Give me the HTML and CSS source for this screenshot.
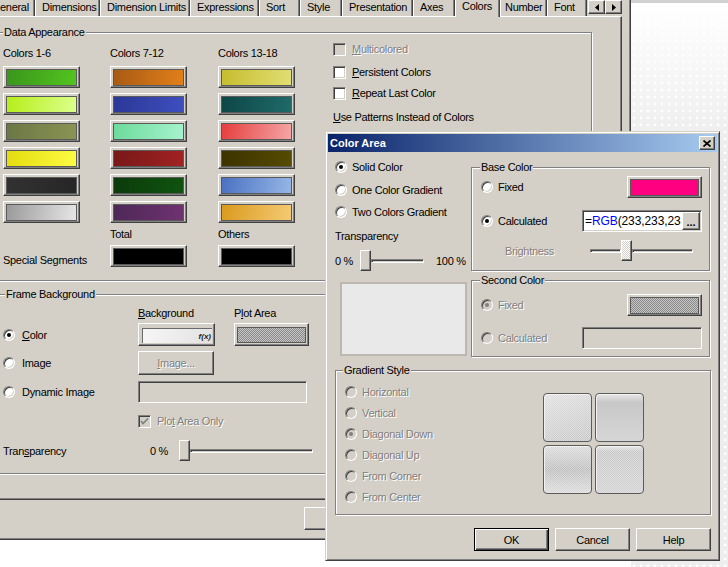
FILE: index.html
```html
<!DOCTYPE html>
<html>
<head>
<meta charset="utf-8">
<link rel="stylesheet" href="styles.css">
</head>
<body>
<div class="screen">
  <div class="mainwin">
    <div class="tabbar">
      <div class="tab first w-gen">eneral</div>
      <div class="tab w-dim">Dimensions</div>
      <div class="tab w-lim">Dimension Limits</div>
      <div class="tab w-exp">Expressions</div>
      <div class="tab w-sort">Sort</div>
      <div class="tab w-style">Style</div>
      <div class="tab w-pres">Presentation</div>
      <div class="tab w-axes">Axes</div>
      <div class="tab sel w-col">Colors</div>
      <div class="tab w-num">Number</div>
      <div class="tab w-font">Font</div>
      <div class="tabarrows">
        <div class="btn arrow"><svg width="4" height="7" viewBox="0 0 4 7"><polygon points="4,0 4,7 0,3.5" fill="#000"/></svg></div>
        <div class="btn arrow"><svg width="4" height="7" viewBox="0 0 4 7"><polygon points="0,0 0,7 4,3.5" fill="#000"/></svg></div>
      </div>
    </div>
    <div class="page">
      <div class="group g-data">
        <span class="glabel gl-data">Data Appearance</span>
        <div class="colors">
          <div class="hdr">Colors 1-6</div>
          <div class="hdr">Colors 7-12</div>
          <div class="hdr">Colors 13-18</div>

          <div class="btn cbtn"><div class="sw c1"></div></div>
          <div class="btn cbtn"><div class="sw c7"></div></div>
          <div class="btn cbtn"><div class="sw c13"></div></div>

          <div class="btn cbtn"><div class="sw c2"></div></div>
          <div class="btn cbtn"><div class="sw c8"></div></div>
          <div class="btn cbtn"><div class="sw c14"></div></div>

          <div class="btn cbtn"><div class="sw c3"></div></div>
          <div class="btn cbtn"><div class="sw c9"></div></div>
          <div class="btn cbtn"><div class="sw c15"></div></div>

          <div class="btn cbtn"><div class="sw c4"></div></div>
          <div class="btn cbtn"><div class="sw c10"></div></div>
          <div class="btn cbtn"><div class="sw c16"></div></div>

          <div class="btn cbtn"><div class="sw c5"></div></div>
          <div class="btn cbtn"><div class="sw c11"></div></div>
          <div class="btn cbtn"><div class="sw c17"></div></div>

          <div class="btn cbtn"><div class="sw c6"></div></div>
          <div class="btn cbtn"><div class="sw c12"></div></div>
          <div class="btn cbtn"><div class="sw c18"></div></div>

          <div class="sublbl col2">Total</div>
          <div class="sublbl col3">Others</div>

          <div class="special">Special Segments</div>
          <div class="btn cbtn"><div class="sw cblack"></div></div>
          <div class="btn cbtn"><div class="sw cblack"></div></div>
        </div>
        <div class="opts">
          <div class="opt"><span class="check dis"></span><span class="dis"><u>M</u>ulticolored</span></div>
          <div class="opt o2"><span class="check"></span><span><u>P</u>ersistent Colors</span></div>
          <div class="opt o3"><span class="check"></span><span><u>R</u>epeat Last Color</span></div>
          <div class="opt o4"><span><u>U</u>se Patterns Instead of Colors</span></div>
        </div>
      </div>

      <div class="group g-frame">
        <span class="glabel gl-frame">Frame Background</span>
        <div class="frow fr1">
          <span></span>
          <span><u>B</u>ackground</span>
          <span>P<u>l</u>ot Area</span>
        </div>
        <div class="frow fr2">
          <div class="ritem"><span class="radio on"></span><span><u>C</u>olor</span></div>
          <div class="btn bgbtn"><div class="bgsw"><span class="fx">f(x)</span></div></div>
          <div class="btn plotbtn"><div class="checker plotsw"></div></div>
        </div>
        <div class="frow fr3">
          <div class="ritem"><span class="radio"></span><span>Image</span></div>
          <div class="btn imgbtn"><span class="dis"><u>I</u>mage...</span></div>
          <span></span>
        </div>
        <div class="frow fr4">
          <div class="ritem"><span class="radio"></span><span>Dynamic Image</span></div>
          <div class="field dynfield"></div>
        </div>
        <div class="frow fr5">
          <span></span>
          <div class="opt"><span class="check dis"><svg width="11" height="11" viewBox="0 0 11 11"><path d="M2 5 L4 7.5 L9 2.5" fill="none" stroke="#808080" stroke-width="1.6"/></svg></span><span class="dis">Plo<u>t</u> Area Only</span></div>
        </div>
        <div class="ftrans">
          <span class="ftlabel">Tran<u>s</u>parency</span>
          <span class="ftpct">0 %</span>
          <div class="slider fslider"><div class="btn thumb"></div><div class="track"></div></div>
        </div>
      </div>
    </div>
    <div class="winbtns"><div class="btn pbtn"></div></div>
  </div>
  <div class="side"></div>
</div>

<div class="dialog">
  <div class="titlebar">
    <span class="title">Color Area</span>
    <div class="btn closebtn"><svg width="8" height="7" viewBox="0 0 8 7"><path d="M0.5 0.5 L7.5 6.5 M7.5 0.5 L0.5 6.5" stroke="#000" stroke-width="1.7"/></svg></div>
  </div>
  <div class="dbody">
    <div class="dtop">
      <div class="dleft">
        <div class="rrow"><span class="radio on"></span><span>Solid Color</span></div>
        <div class="rrow r2"><span class="radio"></span><span>One Color Gradient</span></div>
        <div class="rrow"><span class="radio"></span><span>Two Colors Gradient</span></div>
        <div class="tlabel">Transparency</div>
        <div class="trow">
          <span class="p0">0 %</span>
          <div class="slider dslider"><div class="btn thumb"></div><div class="track"></div></div>
          <span class="p100">100 %</span>
        </div>
        <div class="preview"></div>
      </div>
      <div class="dright">
        <div class="group gbase">
          <span class="glabel gl-base">Base Color</span>
          <div class="grow">
            <div class="rrow"><span class="radio"></span><span>Fixed</span></div>
            <div class="btn cbtn wide"><div class="sw cpink"></div></div>
          </div>
          <div class="grow row2">
            <div class="rrow"><span class="radio on"></span><span>Calculated</span></div>
            <div class="field calc"><span class="ftext">=<span class="fn">RGB</span>(233,233,23</span><div class="btn dots">...</div></div>
          </div>
          <div class="brow">
            <span class="dis blbl">Brightness</span>
            <div class="slider bslider"><div class="track tleft"></div><div class="btn thumb dotted"></div><div class="track"></div></div>
          </div>
        </div>
        <div class="group gsecond">
          <span class="glabel gl-base">Second Color</span>
          <div class="grow g2r1">
            <div class="rrow"><span class="radio dis on"></span><span class="dis">Fixed</span></div>
            <div class="btn cbtn wide"><div class="sw checker"></div></div>
          </div>
          <div class="grow row2b">
            <div class="rrow"><span class="radio dis"></span><span class="dis">Calculated</span></div>
            <div class="field calc2"></div>
          </div>
        </div>
      </div>
    </div>
    <div class="group ggrad">
      <span class="glabel gl-grad">Gradient Style</span>
      <div class="gradlist">
        <div class="rrow g"><span class="radio dis"></span><span class="dis">Horizontal</span></div>
        <div class="rrow g"><span class="radio dis"></span><span class="dis">Vertical</span></div>
        <div class="rrow g"><span class="radio dis on"></span><span class="dis">Diagonal Down</span></div>
        <div class="rrow g"><span class="radio dis"></span><span class="dis">Diagonal Up</span></div>
        <div class="rrow g"><span class="radio dis"></span><span class="dis">From Corner</span></div>
        <div class="rrow g"><span class="radio dis"></span><span class="dis">From Center</span></div>
      </div>
      <div class="tiles">
        <div class="tile t1"></div>
        <div class="tile t2"></div>
        <div class="tile t3"></div>
        <div class="tile t4"></div>
      </div>
    </div>
    <div class="dbtns">
      <div class="btn pbtn def">OK</div>
      <div class="btn pbtn">Cancel</div>
      <div class="btn pbtn">Help</div>
    </div>
  </div>
</div>
</body>
</html>
```
FILE: styles.css
```css
* { box-sizing: border-box; }
body {
  margin: 0;
  width: 728px;
  height: 567px;
  overflow: hidden;
  background: #fff;
  font-family: "Liberation Sans", Arial, sans-serif;
  font-size: 11px;
  letter-spacing: -0.3px;
  color: #000;
  position: relative;
}
u { text-underline-offset: 1px; }
.screen { display: flex; align-items: flex-start; height: 567px; }
.mainwin {
  width: 631px; height: 540px; flex: none;
  background: #d4d0c8;
  border-right: 1px solid #404040;
  border-bottom: 1px solid #404040;
  box-shadow: inset -1px -1px 0 #808080;
  overflow: hidden;
}
.side {
  flex: 1; height: 567px;
  border-top: 3px solid #d2d2d2;
  background:
    radial-gradient(circle at 3px 3px, #fff 1px, transparent 1.7px) 0 0 / 7px 7px,
    linear-gradient(#ffffff, #ebebeb 160px, #eeeeee);
}

/* generic win classic widgets */
.btn {
  background: #d4d0c8;
  border: 1px solid;
  border-color: #fff #404040 #404040 #fff;
  box-shadow: inset -1px -1px 0 #808080;
}
.field {
  border: 1px solid;
  border-color: #808080 #fff #fff #808080;
  box-shadow: inset 1px 1px 0 #404040, inset -1px -1px 0 #d4d0c8;
}
.radio {
  position: relative; flex: none;
  width: 12px; height: 12px; border-radius: 50%;
  background: #fff;
  border: 1px solid; border-color: #808080 #fff #fff #808080;
  box-shadow: inset 1px 1px 0 #404040, inset -1px -1px 0 #d4d0c8;
}
.radio.on::after {
  content: ""; position: absolute; left: 3px; top: 3px;
  width: 4px; height: 4px; border-radius: 50%; background: #000;
}
.radio.dis { background: #d4d0c8; }
.radio.dis.on::after { background: #808080; }
.check {
  flex: none; display: flex; align-items: center; justify-content: center;
  width: 13px; height: 13px; background: #fff;
  border: 1px solid; border-color: #808080 #fff #fff #808080;
  box-shadow: inset 1px 1px 0 #404040, inset -1px -1px 0 #d4d0c8;
}
.check.dis { background: #d4d0c8; }
.dis { color: #808080; text-shadow: 1px 1px 0 #fff; }
.checker {
  background: repeating-conic-gradient(#8a8a8a 0 25%, #c4c4c4 0 50%) 0 0 / 2px 2px;
}

/* tabs */
.tabbar { display: flex; height: 16px; width: 622px; position: relative; z-index: 2; }
.tab {
  flex: none; height: 16px; line-height: 15px;
  padding-left: 6px; white-space: nowrap; overflow: hidden;
  border-left: 1px solid #fff; border-right: 1px solid #404040;
  box-shadow: inset -1px 0 0 #808080;
}
.tab.first { border-left: 0; padding-left: 0; }
.tab.sel { height: 17px; line-height: 12px; background: #d4d0c8; }
.w-gen { width: 35px; }
.w-dim { width: 65px; }
.w-lim { width: 90px; }
.w-exp { width: 69px; }
.w-sort { width: 41px; }
.w-style { width: 42px; }
.w-pres { width: 71px; }
.w-axes { width: 42px; }
.w-col { width: 45px; }
.w-num { width: 47px; padding-left: 4px; }
.w-font { width: 40px; }
.tabarrows { display: flex; margin-left: 1px; align-self: flex-start; }
.arrow { width: 17px; height: 14px; display: flex; align-items: center; justify-content: center; }

/* page */
.page {
  position: relative; z-index: 1;
  width: 622px; height: 484px;
  border-top: 1px solid #fff;
  border-right: 1px solid #404040;
  border-bottom: 1px solid #404040;
  box-shadow: inset -1px -1px 0 #808080;
  padding-top: 15px;
}
.group {
  position: relative;
  border: 1px solid #808080;
  box-shadow: inset 1px 1px 0 #fff, 1px 1px 0 #fff;
}
.glabel {
  position: absolute; top: -8px; line-height: 14px;
  padding: 0 1px; background: #d4d0c8; white-space: nowrap;
}
.gl-data { left: 6px; }
.gl-frame { left: 8px; }
.gl-base { left: 8px; }
.gl-grad { left: 7px; }

.g-data { margin-left: -4px; width: 596px; height: 249px; padding-left: 6px; display: flex; }
.colors {
  margin-top: 13px;
  display: grid;
  grid-template-columns: 107px 108px 77px;
  grid-template-rows: 15px repeat(6, 22px) 12px 22px;
  row-gap: 5px;
}
.hdr { line-height: 15px; white-space: nowrap; }
.sublbl { line-height: 12px; }
.col2 { grid-column: 2; }
.col3 { grid-column: 3; }
.special { grid-column: 1; align-self: end; line-height: 14px; white-space: nowrap; }
.cbtn { width: 77px; height: 22px; padding: 2px 2px 1px 2px; display: flex; }
.sw { flex: 1; border: 1px solid #5a5a5a; }
.c1 { background: linear-gradient(100deg, #3a961c, #52c41e); }
.c2 { background: linear-gradient(100deg, #b6ee18, #dcff8c); }
.c3 { background: linear-gradient(100deg, #6b7744, #8b9454); }
.c4 { background: linear-gradient(100deg, #e4dc0e, #fdfc44); }
.c5 { background: linear-gradient(100deg, #323232, #262626); }
.c6 { background: linear-gradient(100deg, #9a9a9a, #e6e6e6); }
.c7 { background: linear-gradient(100deg, #a85a14, #e2801a); }
.c8 { background: linear-gradient(100deg, #2c3896, #3e4ebe); }
.c9 { background: linear-gradient(100deg, #6cdb9a, #a6f2ce); }
.c10 { background: linear-gradient(100deg, #781818, #a22222); }
.c11 { background: linear-gradient(100deg, #0c3a0c, #0f540f); }
.c12 { background: linear-gradient(100deg, #4c2856, #703272); }
.c13 { background: linear-gradient(100deg, #c6bd2e, #e2de74); }
.c14 { background: linear-gradient(100deg, #0e4646, #1f6a6a); }
.c15 { background: linear-gradient(100deg, #e63e3e, #f4a6a6); }
.c16 { background: linear-gradient(100deg, #3c3300, #564b00); }
.c17 { background: linear-gradient(100deg, #4a72c2, #96b6e6); }
.c18 { background: linear-gradient(100deg, #da9a1e, #f5ca74); }
.cblack { background: #000; }
.cpink { background: #ff0080; }

.opts { margin-left: 38px; padding-top: 9px; display: flex; flex-direction: column; }
.opt { display: flex; align-items: center; height: 14px; gap: 6px; white-space: nowrap; }
.o2 { margin-top: 9px; }
.o3 { margin-top: 7px; }
.o4 { margin-top: 10px; }

/* frame background */
.g-frame { margin-left: -4px; margin-top: 13px; width: 596px; height: 180px; padding-left: 6px; }
.frow { display: grid; grid-template-columns: 135px 96px auto; align-items: center; }
.fr1 { margin-top: 11px; height: 14px; }
.fr2 { margin-top: 3px; height: 23px; }
.fr3 { margin-top: 5px; height: 24px; }
.fr4 { margin-top: 6px; height: 22px; }
.fr5 { margin-top: 11px; height: 14px; }
.ritem { display: flex; align-items: center; gap: 7px; white-space: nowrap; }
.bgbtn { width: 77px; height: 23px; padding: 4px 2px 2px 3px; display: flex; }
.bgsw {
  flex: 1; display: flex; align-items: center; justify-content: flex-end; padding-right: 1px;
  background: linear-gradient(100deg, #f6f6f6, #e2e2e2);
  border-top: 1px solid #6a6a6a; border-left: 1px solid #6a6a6a;
}
.fx { font-size: 8px; font-style: italic; font-weight: bold; letter-spacing: 0; color: #202020; }
.plotbtn { width: 75px; height: 23px; padding: 3px 2px 2px 2px; display: flex; }
.plotsw { flex: 1; border: 1px solid #5a5a5a; }
.imgbtn { width: 76px; height: 24px; display: flex; align-items: center; justify-content: center; }
.dynfield { grid-column: 2 / span 2; width: 169px; height: 22px; }
.ftrans { margin-top: 12px; height: 21px; display: flex; align-items: center; }
.ftlabel { width: 147px; }
.ftpct { width: 29px; }
.slider { display: flex; align-items: center; height: 21px; }
.fslider { width: 134px; }
.thumb { flex: none; width: 11px; height: 21px; }
.track {
  flex: 1; height: 4px;
  border: 1px solid; border-color: #808080 #fff #fff #808080;
  box-shadow: inset 1px 1px 0 #404040;
}
.winbtns { padding: 7px 0 0 304px; }
.pbtn { width: 75px; height: 23px; display: flex; align-items: center; justify-content: center; }

/* dialog */
.dialog {
  position: absolute; left: 325px; top: 131px; z-index: 5;
  width: 395px; height: 430px;
  background: #d4d0c8;
  border: 1px solid; border-color: #d4d0c8 #404040 #404040 #d4d0c8;
  box-shadow: inset 1px 1px 0 #fff, inset -1px -1px 0 #808080;
  padding: 2px;
  display: flex; flex-direction: column;
}
.titlebar {
  flex: none; height: 18px;
  background: linear-gradient(to right, #0a246a, #a6caf0);
  display: flex; align-items: center; justify-content: space-between;
  padding: 0 2px;
}
.title { color: #fff; font-weight: bold; letter-spacing: 0; }
.closebtn { width: 16px; height: 14px; display: flex; align-items: center; justify-content: center; }
.dbody { padding: 0 6px 0 7px; }
.dtop { display: flex; }
.dleft { width: 132px; flex: none; padding-top: 4px; }
.rrow { display: flex; align-items: center; gap: 5px; height: 22px; white-space: nowrap; }
.r2 { height: 23px; }
.tlabel { margin-top: 6px; line-height: 14px; }
.trow { margin-top: 7px; display: flex; align-items: center; height: 21px; white-space: nowrap; }
.p0 { width: 25px; }
.dslider { width: 64px; }
.p100 { margin-left: 12px; }
.preview { margin: 11px 0 0 5px; width: 127px; height: 74px; background: #e9e9e9; border: 2px solid #bcb8b0; }
.dright { margin-left: 4px; width: 239px; flex: none; }
.gbase { margin-top: 15px; height: 104px; padding: 8px 7px 0 9px; }
.grow { display: flex; align-items: center; justify-content: space-between; height: 22px; }
.row2 { margin-top: 12px; }
.wide { width: 75px; }
.calc { width: 120px; height: 22px; background: #fff; padding: 1px; display: flex; align-items: center; }
.ftext { flex: 1; overflow: hidden; white-space: nowrap; font-size: 12px; letter-spacing: -0.1px; line-height: 18px; padding-left: 1px; }
.fn { color: #0000ff; }
.dots { flex: none; width: 18px; height: 18px; font-weight: bold; font-size: 11px; letter-spacing: 0; display: flex; align-items: flex-end; justify-content: center; line-height: 13px; }
.brow { margin-top: 8px; height: 21px; display: flex; align-items: center; }
.blbl { margin-left: 24px; width: 85px; }
.bslider { width: 103px; }
.tleft { flex: none; width: 31px; }
.dotted {
  background: repeating-conic-gradient(#d4d0c8 0 25%, #fff 0 50%) 0 0 / 2px 2px;
}
.gsecond { margin-top: 9px; height: 77px; padding: 12px 7px 0 9px; }
.g2r1 { height: 23px; }
.row2b { margin-top: 11px; }
.calc2 { width: 120px; height: 22px; }
.ggrad { margin-top: 13px; height: 145px; padding: 10px 0 0 9px; display: flex; }
.gradlist { width: 198px; flex: none; }
.rrow.g { height: 21px; }
.tiles { margin-top: 12px; display: grid; grid-template-columns: 49px 49px; grid-template-rows: 49px 49px; gap: 3px; }
.tile {
  border: 1px solid #5c5c5c; border-radius: 4px;
  box-shadow: inset 1px 1px 0 #f2f2f2;
}
.t1 { background: repeating-conic-gradient(rgba(255,255,255,.35) 0 25%, transparent 0 50%) 0 0 / 2px 2px, linear-gradient(160deg, #e0e0e0, #c6c6c6); }
.t2 { background: linear-gradient(#e6e6e6 0, #c8c8c8 18%, #d6d6d6 100%); }
.t3 { background: repeating-conic-gradient(rgba(255,255,255,.3) 0 25%, transparent 0 50%) 0 0 / 2px 2px, linear-gradient(#dcdcdc, #c0c0c0 50%, #dcdcdc); }
.t4 { background: repeating-conic-gradient(rgba(255,255,255,.35) 0 25%, transparent 0 50%) 0 0 / 2px 2px, linear-gradient(#e4e4e4, #c8c8c8 12%, #d2d2d2); }
.dbtns { margin-top: 13px; display: flex; justify-content: flex-end; gap: 6px; }
.pbtn.def {
  border: 1px solid #000;
  box-shadow: inset 1px 1px 0 #fff, inset -1px -1px 0 #404040, inset -2px -2px 0 #808080;
}
```
